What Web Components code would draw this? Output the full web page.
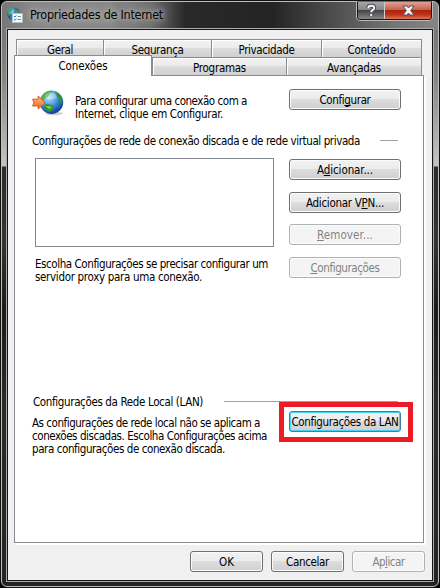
<!DOCTYPE html>
<html lang="pt-BR"><head><meta charset="utf-8"><title>Propriedades de Internet</title>
<style>
html,body{margin:0;background:#000;overflow:hidden}
body{font:11.5px/13px "DejaVu Sans Condensed","DejaVu Sans",sans-serif;font-stretch:condensed;color:#000;width:440px;height:588px}
</style></head><body>
<inet-dialog></inet-dialog>
<script>
const make=(name,html,ready)=>customElements.define(name,class extends HTMLElement{
  constructor(){super();this.attachShadow({mode:'open'}).innerHTML=html}
  connectedCallback(){if(ready)ready.call(this)}
});

/* One line of text, spaced to the width given in w. */
make('text-line',`<style>:host{display:block;white-space:nowrap;height:13px;line-height:15px}span{display:inline-block;white-space:pre}u{text-underline-offset:1px;text-decoration-thickness:1px;text-decoration-skip-ink:none}</style><span></span>`,function(){
  const s=this.shadowRoot.querySelector('span');
  const t=this.getAttribute('text'),k=+(this.getAttribute('key')??-1);
  if(k<0)s.textContent=t;else{const u=document.createElement('u');u.textContent=t[k];s.append(t.slice(0,k),u,t.slice(k+1))}
  const w=+this.getAttribute('w');
  if(w){const d=(w-s.getBoundingClientRect().width)/t.length;s.style.letterSpacing=d+'px'}
});

make('win-button',`<style>
:host{display:flex;box-sizing:border-box;width:112px;height:21px;border:1px solid #707070;border-radius:3px;align-items:center;justify-content:center;
background:linear-gradient(#f2f2f2 0,#ebebeb 48%,#dddddd 50%,#cfcfcf 100%);box-shadow:inset 0 0 0 1px #fcfcfc}
:host([small]){width:73px}
:host([disabled]){background:#f4f4f4;border-color:#adb2b5;color:#838383}
:host([focused]){border-color:#3c7fb1;box-shadow:inset 0 0 0 1px #46d0f3}
</style><slot></slot>`);

make('win-tab',`<style>
:host{display:flex;box-sizing:border-box;height:19px;border:1px solid #898c95;border-right-width:0;align-items:center;justify-content:center;padding-top:1px;
background:linear-gradient(#f2f2f2 0,#ebebeb 48%,#dddddd 50%,#cfcfcf 100%);box-shadow:inset 1px 1px #fff}
:host([last]){border-right-width:1px}
:host([active]){height:21px;background:#fff;border-right-width:1px;border-bottom-width:0;z-index:2;margin-top:-2px;position:relative;padding:0 0 2px}
</style><slot></slot>`);

make('tab-strip',`<style>
:host{display:block;margin:0 0 0 6px;width:409px}
.a{display:grid;grid-template-columns:87px 108px 110px 101px;padding-left:2px;height:18px}
.b{display:grid;grid-template-columns:138px 134px 136px;height:19px}
</style>
<div class="a"><win-tab><text-line text="Geral" w="26"></text-line></win-tab><win-tab><text-line text="Segurança" w="52"></text-line></win-tab><win-tab><text-line text="Privacidade" w="56"></text-line></win-tab><win-tab last><text-line text="Conteúdo" w="48"></text-line></win-tab></div>
<div class="b"><win-tab active><text-line text="Conexões" w="49"></text-line></win-tab><win-tab><text-line text="Programas" w="53"></text-line></win-tab><win-tab last><text-line text="Avançadas" w="54"></text-line></win-tab></div>`);

make('globe-arrow',`<style>:host{display:block;width:32px;height:26px}svg{display:block}</style>
<svg width="32" height="26" viewBox="0 0 32 26"><defs><radialGradient id="g" cx=".38" cy=".28" r=".75"><stop offset="0" stop-color="#c5eafc"/><stop offset=".4" stop-color="#5aa8e8"/><stop offset=".8" stop-color="#2458ba"/><stop offset="1" stop-color="#15368c"/></radialGradient><linearGradient id="o" x2="0" y2="1"><stop stop-color="#ffbd85"/><stop offset="1" stop-color="#ee6421"/></linearGradient></defs>
<ellipse cx="22" cy="23.5" rx="9" ry="1.7" fill="#999" opacity=".45"/>
<circle cx="19.5" cy="12.3" r="11.7" fill="url(#g)"/>
<path d="M9 7Q12 2 17 1Q20 0 21 2L18 4L16 7L13 8L11 11Q8 10 9 7Z" fill="#58ad5b"/>
<path d="M23 2Q28 4 30 8L30.500 13L28 14L26.500 11L27 8L24 6ZM12 15L16 14L21 16L22 19L18 22L15 21L12 18Z" fill="#289632"/>
<path d="M13 16L18 16L20 18L17 19Z" fill="#7fcb4b"/><ellipse cx="19" cy="6" rx="6" ry="3.5" fill="#fff" opacity=".3"/>
<path d="M.6 9.2H6.2V6L13.2 12.7L6.2 19V16H.6L2 12.6Z" fill="url(#o)" stroke="#d35b20"/></svg>`);

make('title-bar',`<style>
:host{display:flex;height:26px;align-items:flex-start;font-size:12.5px;line-height:16px}
svg{display:block}.icon{margin:4px 0 0 5px}
.t{margin:4px 0 0 7px;height:16px;line-height:16px;text-shadow:0 0 5px #bbb,0 0 8px #aaa,0 0 12px #aaa,0 0 16px #999}
.c{margin-left:auto;margin-right:5px;margin-top:-2px}
</style>
<svg class="icon" width="16" height="16" viewBox="0 0 16 16"><defs><radialGradient id="h" cx=".35" cy=".3"><stop stop-color="#b4e2f6"/><stop offset=".55" stop-color="#3d83d0"/><stop offset="1" stop-color="#204a9b"/></radialGradient></defs><circle cx="6.5" cy="6.8" r="6.4" fill="url(#h)"/><path d="M1 5Q2 1 6 1L5 4L3 6L2 9ZM10 2L12 5L11 7L9 5ZM3 10L6 9L7 12L5 13Z" fill="#4aa83f"/><rect x="5.5" y="6.5" width="10" height="9" fill="#fafafa" stroke="#b6bcc1"/><path d="M7 9.2l1 .8 1.3-1.6M7 12.5l1 .8 1.3-1.6" fill="none" stroke="#2679c5"/><path d="M10.5 9.5H14M10.5 12.5H14" stroke="#7b9ab0"/></svg>
<text-line class="t" text="Propriedades de Internet" w="133"></text-line>
<svg class="c" width="77" height="20" viewBox="0 0 77 20"><defs><linearGradient id="q" x2="0" y2="1"><stop stop-color="#a6a6a6"/><stop offset=".48" stop-color="#858585"/><stop offset=".5" stop-color="#444"/><stop offset="1" stop-color="#888"/></linearGradient><linearGradient id="r" x2="0" y2="1"><stop stop-color="#dfa294"/><stop offset=".46" stop-color="#c7604c"/><stop offset=".49" stop-color="#ab2410"/><stop offset=".75" stop-color="#bd3219"/><stop offset="1" stop-color="#df7657"/></linearGradient></defs>
<path d="M.5 0V16Q.5 19.500 4 19.500H73Q76.500 19.500 76.500 16V0Z" fill="#171717" stroke="#bbb"/><path d="M2 1H28V18H4Q2 18 2 16Z" fill="url(#q)"/><path d="M29 1H75V16Q75 18 73 18H29Z" fill="url(#r)"/><path d="M28.500 1V18" stroke="#ccc"/>
<path d="M12.200 7.200Q12.300 4.700 15.300 4.700Q18.200 4.700 18.200 7Q18.200 8.400 16.500 9.200Q15.200 9.800 15.200 11.200M15.200 13V15" fill="none" stroke="#444a58" stroke-width="4"/><path d="M12.200 7.200Q12.300 4.700 15.300 4.700Q18.200 4.700 18.200 7Q18.200 8.400 16.500 9.200Q15.200 9.800 15.200 11.200M15.200 13V15" fill="none" stroke="#f4f4f4" stroke-width="2"/>
<path d="M47 5H51L52.500 7L54 5H58L54.700 9.500L58 14H54L52.500 12L51 14H47L50.300 9.500Z" fill="#f7f7f7" stroke="#555064"/></svg>`);

make('group-title',`<style>:host{display:flex;align-items:center;height:13px;padding-right:3px}i{flex:none;height:1px;background:#a0a0a0;margin:-1px 0 0 auto}</style><slot></slot><i></i>`,function(){this.shadowRoot.querySelector('i').style.width=this.getAttribute('rule')+'px'});

make('connections-panel',`<style>
:host{display:block;box-sizing:border-box;margin-left:6px;width:410px;height:468px;margin-top:-1px;border:1px solid #898c95;background:#fff;box-shadow:2px 2px #fff;padding:13px 22px 0 17px}
.row{display:flex;justify-content:space-between}
.intro{height:45px}.intro globe-arrow{margin-top:1px}.intro .p{margin:5px auto 0 11px}
.list{box-sizing:border-box;width:239px;height:89px;border:1px solid #828790;margin-left:3px}
.dial{margin-top:11px;height:99px}.note{margin:10px 0 0 3px}
.btns{display:grid;grid-auto-rows:21px;row-gap:12px;padding-top:1px}
.btns win-button:nth-child(n+3){margin-top:-1px;margin-bottom:1px}
.lan-title{margin-top:138px;padding-left:1px}
.lan{margin-top:8px}.lan win-button{margin-top:-5px;position:relative}
.hl{position:absolute;inset:-10px -13px -11px -11px;border:5px solid #ed1c24}
</style>
<div class="row intro"><globe-arrow></globe-arrow><div class="p"><text-line text="Para configurar uma conexão com a" w="172"></text-line><text-line text="Internet, clique em Configurar." w="148"></text-line></div><win-button><text-line text="Configurar" key="5" w="51"></text-line></win-button></div>
<group-title rule="18"><text-line text="Configurações de rede de conexão discada e de rede virtual privada" w="328"></text-line></group-title>
<div class="row dial"><div><div class="list"></div><div class="note"><text-line text="Escolha Configurações se precisar configurar um" w="233"></text-line><text-line text="servidor proxy para uma conexão." w="167"></text-line></div></div>
<div class="btns"><win-button><text-line text="Adicionar..." key="1" w="56"></text-line></win-button><win-button><text-line text="Adicionar VPN..." key="11" w="78"></text-line></win-button><win-button disabled><text-line text="Remover..." key="0" w="56"></text-line></win-button><win-button disabled><text-line text="Configurações" key="0" w="69"></text-line></win-button></div></div>
<group-title class="lan-title" rule="174"><text-line text="Configurações da Rede Local (LAN)" w="170"></text-line></group-title>
<div class="row lan"><div><text-line text="As configurações de rede local não se aplicam a" w="228"></text-line><text-line text="conexões discadas. Escolha Configurações acima" w="235"></text-line><text-line text="para configurações de conexão discada." w="193"></text-line></div><win-button focused><text-line text="Configurações da LAN" w="107"></text-line><div class="hl"></div></win-button></div>`);

make('inet-dialog',`<style>
:host{display:block;box-sizing:border-box;width:440px;height:588px;padding:2px;border-radius:7px;position:relative;overflow:hidden;background:#111}
.frame{box-sizing:border-box;width:438px;height:586px;margin:-1px;border:1px solid #bdbdbd;border-radius:6px;padding:1px 0 0 0;
background:linear-gradient(90deg,#777 0,#8c8c8c 8%,#8c8c8c 24%,#707070 34%,#292929 42%,#242424 62%,#4b4b4b 75%,#757575 90%,#858585) 0 0/100% 28px no-repeat,linear-gradient(#777 28px,#858585 75px,#c4c4c4 164px,#2c2c2c 165px,#343434 240px,#1b1b1b 310px,#2b2b2b 400px,#242424)}
.client{box-sizing:border-box;margin:0 5px;width:426px;height:552px;border:1px solid #161616;outline:1px solid #aaa;outline-offset:0;background:#f0f0f0;padding:9px 0 0 0}
.foot{display:flex;justify-content:flex-end;gap:8px;padding:8px 7px 0 0}
</style><div class="frame"><title-bar></title-bar><div class="client"><tab-strip></tab-strip><connections-panel></connections-panel><div class="foot"><win-button small><text-line text="OK" w="15"></text-line></win-button><win-button small><text-line text="Cancelar" w="43"></text-line></win-button><win-button small disabled><text-line text="Aplicar" key="2" w="32"></text-line></win-button></div></div></div>`);
</script></body></html>
